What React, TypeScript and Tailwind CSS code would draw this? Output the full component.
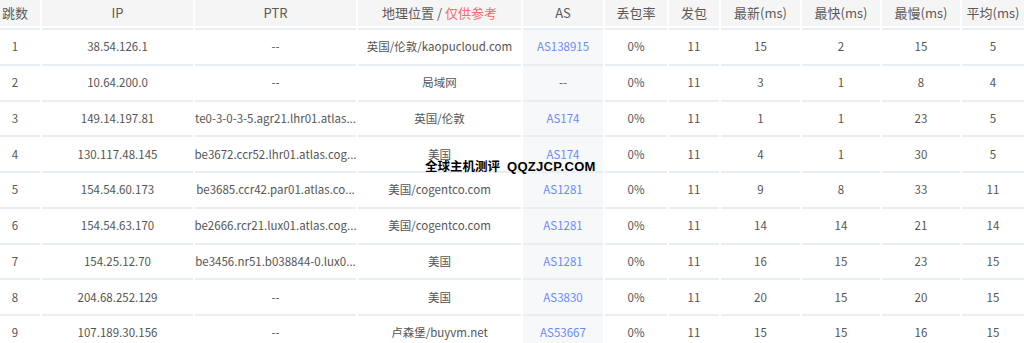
import React from "react";

type Hop = {
  n: number;
  ip: string;
  ptr: string;
  geo: string;
  as: string;
  loss: string;
  sent: number;
  last: number;
  best: number;
  worst: number;
  avg: number;
};

const hops: Hop[] = [
  { n: 1, ip: "38.54.126.1", ptr: "--", geo: "英国/伦敦/kaopucloud.com", as: "AS138915", loss: "0%", sent: 11, last: 15, best: 2, worst: 15, avg: 5 },
  { n: 2, ip: "10.64.200.0", ptr: "--", geo: "局域网", as: "--", loss: "0%", sent: 11, last: 3, best: 1, worst: 8, avg: 4 },
  { n: 3, ip: "149.14.197.81", ptr: "te0-3-0-3-5.agr21.lhr01.atlas...", geo: "英国/伦敦", as: "AS174", loss: "0%", sent: 11, last: 1, best: 1, worst: 23, avg: 5 },
  { n: 4, ip: "130.117.48.145", ptr: "be3672.ccr52.lhr01.atlas.cog...", geo: "美国", as: "AS174", loss: "0%", sent: 11, last: 4, best: 1, worst: 30, avg: 5 },
  { n: 5, ip: "154.54.60.173", ptr: "be3685.ccr42.par01.atlas.co...", geo: "美国/cogentco.com", as: "AS1281", loss: "0%", sent: 11, last: 9, best: 8, worst: 33, avg: 11 },
  { n: 6, ip: "154.54.63.170", ptr: "be2666.rcr21.lux01.atlas.cog...", geo: "美国/cogentco.com", as: "AS1281", loss: "0%", sent: 11, last: 14, best: 14, worst: 21, avg: 14 },
  { n: 7, ip: "154.25.12.70", ptr: "be3456.nr51.b038844-0.lux0...", geo: "美国", as: "AS1281", loss: "0%", sent: 11, last: 16, best: 15, worst: 23, avg: 15 },
  { n: 8, ip: "204.68.252.129", ptr: "--", geo: "美国", as: "AS3830", loss: "0%", sent: 11, last: 20, best: 15, worst: 20, avg: 15 },
  { n: 9, ip: "107.189.30.156", ptr: "--", geo: "卢森堡/buyvm.net", as: "AS53667", loss: "0%", sent: 11, last: 15, best: 15, worst: 16, avg: 15 },
];

const cols = "grid grid-cols-[40px_151px_161px_163px_80px_62px_50px_79px_78px_78px_62px] gap-x-[2px]";
const font = { fontFamily: '"Noto Sans CJK SC", "Noto Sans", sans-serif' };

function Th({ children, first }: { children: React.ReactNode; first?: boolean }) {
  return (
    <div className={`h-[26px] bg-[#f5f5f6] flex items-center justify-center text-[13px] text-[#5a5a5a] ${first ? "pr-[10px]" : ""}`}>
      {children}
    </div>
  );
}

function Td({ children, first, as }: { children: React.ReactNode; first?: boolean; as?: boolean }) {
  return (
    <div
      className={`h-[35.75px] border-t-2 border-[#e9eef3] flex items-center justify-center text-[11.5px] whitespace-nowrap
        ${as ? "bg-[#f7f8fa]" : ""} ${first ? "pr-[10px]" : ""}`}
    >
      {children}
    </div>
  );
}

export default function App() {
  return (
    <div className="relative w-[1024px] h-[343px] overflow-hidden bg-white text-[#555]" style={font}>
      <div className={`${cols} mb-[2px]`}>
        <Th first>跳数</Th>
        <Th>IP</Th>
        <Th>PTR</Th>
        <Th>
          地理位置 / <span className="text-[#f56c6c] ml-[3px]">仅供参考</span>
        </Th>
        <Th>AS</Th>
        <Th>丢包率</Th>
        <Th>发包</Th>
        <Th>最新(ms)</Th>
        <Th>最快(ms)</Th>
        <Th>最慢(ms)</Th>
        <Th>平均(ms)</Th>
      </div>

      {hops.map((h) => (
        <div key={h.n} className={cols}>
          <Td first>{h.n}</Td>
          <Td>{h.ip}</Td>
          <Td>{h.ptr}</Td>
          <Td>{h.geo}</Td>
          <Td as>
            <span className={h.as === "--" ? "text-[#555]" : "text-[#6b8afd]"}>{h.as}</span>
          </Td>
          <Td>{h.loss}</Td>
          <Td>{h.sent}</Td>
          <Td>{h.last}</Td>
          <Td>{h.best}</Td>
          <Td>{h.worst}</Td>
          <Td>{h.avg}</Td>
        </div>
      ))}

      {/* watermark */}
      <div className="absolute left-[425px] top-[160px] flex items-center gap-[7px] font-bold text-black leading-none">
        <span className="text-[12.5px]">全球主机测评</span>
        <span className="text-[13px] tracking-[0.3px]" style={{ fontFamily: '"Liberation Sans", sans-serif' }}>
          QQZJCP.COM
        </span>
      </div>
    </div>
  );
}
